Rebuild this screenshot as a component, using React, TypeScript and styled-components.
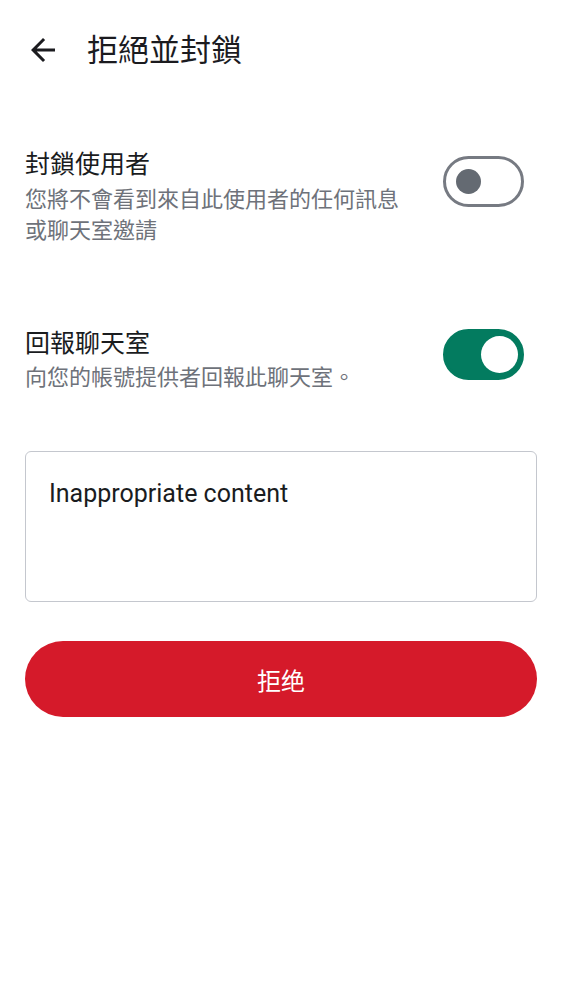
import { useState } from "react";
import styled, { createGlobalStyle } from "styled-components";

const GlobalStyle = createGlobalStyle`
  body {
    margin: 0;
    background: #ffffff;
    font-family: Roboto, "Noto Sans CJK TC", sans-serif;
  }
`;

const Page = styled.div`
  display: flex;
  flex-direction: column;
  padding: 0 25px;
`;

const Header = styled.header`
  display: flex;
  align-items: center;
  height: 102px;
`;

const BackButton = styled.button`
  width: 36px;
  height: 36px;
  margin-top: -2px;
  padding: 0;
  border: none;
  background: none;
  color: #1b1b1f;
  display: flex;
  align-items: center;
  justify-content: center;
  cursor: pointer;
`;

const Title = styled.h1`
  margin: 0 0 0 26px;
  font-size: 31px;
  font-weight: 400;
  color: #1b1b1f;
  line-height: 1.3;
`;

const Row = styled.div<{ $top: number }>`
  display: flex;
  align-items: flex-start;
  gap: 24px;
  padding-right: 13px;
  margin-top: ${(p) => p.$top}px;
`;

const RowText = styled.div`
  flex: 1;
  display: flex;
  flex-direction: column;
`;

const RowTitle = styled.div`
  font-size: 25px;
  line-height: 37.5px;
  color: #1a1c1e;
`;

const RowSub = styled.div`
  font-size: 22px;
  line-height: 31px;
  color: #6e727a;
`;

const Switch = styled.button<{ $on: boolean; $offset: number }>`
  flex: none;
  box-sizing: border-box;
  width: 81px;
  height: 51px;
  margin-top: ${(p) => p.$offset}px;
  padding: 0;
  border-radius: 26px;
  border: 3px solid ${(p) => (p.$on ? "#037b5f" : "#767a82")};
  background: ${(p) => (p.$on ? "#037b5f" : "#ffffff")};
  display: flex;
  align-items: center;
  cursor: pointer;
`;

const Thumb = styled.span<{ $on: boolean }>`
  display: block;
  border-radius: 50%;
  width: ${(p) => (p.$on ? 37 : 25)}px;
  height: ${(p) => (p.$on ? 37 : 25)}px;
  margin-left: ${(p) => (p.$on ? "auto" : "10px")};
  margin-right: ${(p) => (p.$on ? "3px" : "0")};
  background: ${(p) => (p.$on ? "#ffffff" : "#646a72")};
`;

const Field = styled.textarea`
  box-sizing: border-box;
  margin-top: 58px;
  width: 100%;
  height: 151px;
  padding: 23px 23px 21px;
  border: 1.5px solid #c4c7ce;
  border-radius: 6px;
  resize: none;
  outline: none;
  font-family: Roboto, "Noto Sans CJK TC", sans-serif;
  font-size: 25px;
  line-height: 37.5px;
  color: #1a1c1e;
  background: #ffffff;
`;

const RejectButton = styled.button`
  margin-top: 39px;
  height: 76px;
  width: 100%;
  border: none;
  border-radius: 38px;
  background: #d51a2a;
  color: #ffffff;
  font-family: Roboto, "Noto Sans CJK TC", sans-serif;
  font-size: 24px;
  cursor: pointer;
`;

const ArrowBack = () => (
  <svg width="36" height="36" viewBox="0 0 24 24" fill="currentColor">
    <path d="M20 11H7.83l5.59-5.59L12 4l-8 8 8 8 1.41-1.41L7.83 13H20v-2z" />
  </svg>
);

export default function App() {
  const [block, setBlock] = useState(false);
  const [report, setReport] = useState(true);

  return (
    <Page>
      <GlobalStyle />
      <Header>
        <BackButton aria-label="back">
          <ArrowBack />
        </BackButton>
        <Title>拒絕並封鎖</Title>
      </Header>

      <Row $top={44}>
        <RowText>
          <RowTitle>封鎖使用者</RowTitle>
          <RowSub>您將不會看到來自此使用者的任何訊息或聊天室邀請</RowSub>
        </RowText>
        <Switch $on={block} $offset={10} onClick={() => setBlock(!block)}>
          <Thumb $on={block} />
        </Switch>
      </Row>

      <Row $top={79}>
        <RowText>
          <RowTitle>回報聊天室</RowTitle>
          <RowSub>向您的帳號提供者回報此聊天室。</RowSub>
        </RowText>
        <Switch $on={report} $offset={4} onClick={() => setReport(!report)}>
          <Thumb $on={report} />
        </Switch>
      </Row>

      <Field defaultValue="Inappropriate content" />

      <RejectButton>拒绝</RejectButton>
    </Page>
  );
}
